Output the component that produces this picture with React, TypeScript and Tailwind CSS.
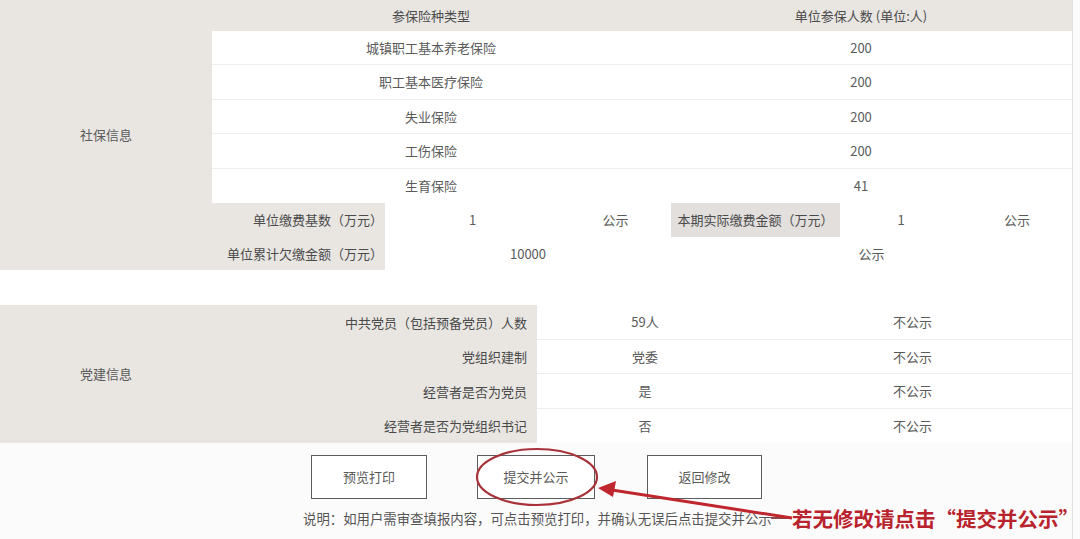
import React from 'react';

const font = 'font-["Noto_Sans_CJK_SC","Noto_Sans",sans-serif]';

const insurances = [
  { name: '城镇职工基本养老保险', count: '200' },
  { name: '职工基本医疗保险', count: '200' },
  { name: '失业保险', count: '200' },
  { name: '工伤保险', count: '200' },
  { name: '生育保险', count: '41' },
];

const party = [
  { label: '中共党员（包括预备党员）人数', value: '59人' },
  { label: '党组织建制', value: '党委' },
  { label: '经营者是否为党员', value: '是' },
  { label: '经营者是否为党组织书记', value: '否' },
];

export default function App() {
  return (
    <div className={`relative w-[1080px] h-[539px] overflow-hidden bg-[#fcfbfb] text-[13px] text-[#5a5a5a] ${font}`}>
      <div className="w-[1073px] h-full border-r border-[#e4e1de] flex flex-col">
        {/* 社保信息 */}
        <div className="flex h-[270px] shrink-0">
          <div className="w-[212px] bg-[#e9e6e2] flex items-center justify-center">社保信息</div>
          <div className="flex-1 flex flex-col">
            <div className="h-[31px] shrink-0 bg-[#e9e6e2] flex items-center text-[#4a4a4a]">
              <div className="w-[438px] text-center">参保险种类型</div>
              <div className="flex-1 text-center">单位参保人数 (单位:人)</div>
            </div>
            <div className="bg-white shrink-0">
              {insurances.map((row, i) => (
                <div
                  key={row.name}
                  className={`h-[34.4px] flex items-center ${i < insurances.length - 1 ? 'border-b border-[#f0eeec]' : ''}`}
                >
                  <div className="w-[438px] text-center">{row.name}</div>
                  <div className="flex-1 text-center">{row.count}</div>
                </div>
              ))}
            </div>
            <div className="h-[34px] shrink-0 flex items-stretch bg-white">
              <div className="w-[173px] bg-[#e9e6e2] flex items-center justify-end pr-[2px] text-[#4a4a4a]">单位缴费基数（万元）</div>
              <div className="w-[175px] flex items-center justify-center">1</div>
              <div className="w-[111px] flex items-center justify-center">公示</div>
              <div className="w-[169px] bg-[#e2dfdc] flex items-center justify-center text-[#4a4a4a]">本期实际缴费金额（万元）</div>
              <div className="w-[122px] flex items-center justify-center">1</div>
              <div className="flex-1 flex items-center justify-center">公示</div>
            </div>
            <div className="h-[33px] shrink-0 flex items-stretch bg-white">
              <div className="w-[173px] bg-[#e9e6e2] flex items-center justify-end pr-[2px] text-[#4a4a4a]">单位累计欠缴金额（万元）</div>
              <div className="w-[286px] flex items-center justify-center">10000</div>
              <div className="flex-1 flex items-center justify-center">公示</div>
            </div>
          </div>
        </div>

        <div className="h-[35px] shrink-0 bg-white" />

        {/* 党建信息 */}
        <div className="flex h-[138px] shrink-0">
          <div className="w-[537px] bg-[#e9e6e2] flex">
            <div className="w-[212px] flex items-center justify-center">党建信息</div>
            <div className="flex-1 flex flex-col">
              {party.map((row) => (
                <div key={row.label} className="h-[34.5px] flex items-center justify-end pr-[10px] text-[#4a4a4a]">
                  {row.label}
                </div>
              ))}
            </div>
          </div>
          <div className="flex-1 bg-white flex flex-col">
            {party.map((row, i) => (
              <div
                key={row.label}
                className={`h-[34.5px] flex items-center ${i < party.length - 1 ? 'border-b border-[#f0eeec]' : ''}`}
              >
                <div className="w-[216px] text-center">{row.value}</div>
                <div className="flex-1 text-center">不公示</div>
              </div>
            ))}
          </div>
        </div>

        {/* 操作按钮 */}
        <div className="mt-[12px] flex shrink-0">
          <div className="ml-[311px] w-[116px] h-[44px] border border-[#5c5c5c] bg-white flex items-center justify-center">预览打印</div>
          <div className="ml-[50px] w-[118px] h-[44px] border border-[#5c5c5c] bg-white flex items-center justify-center">提交并公示</div>
          <div className="ml-[52px] w-[115px] h-[44px] border border-[#5c5c5c] bg-white flex items-center justify-center">返回修改</div>
        </div>

        <div className="mt-[9px] flex items-center shrink-0">
          <div className="ml-[303px] w-[468px] shrink-0 whitespace-nowrap text-[13.4px] text-[#555]">说明：如用户需审查填报内容，可点击预览打印，并确认无误后点击提交并公示</div>
          <div className="w-[20px] h-[2px] shrink-0 bg-[#8a4a4a]" />
          <div className="ml-[1px] text-[20.5px] font-bold text-[#b8232d] leading-none whitespace-nowrap">若无修改请点击“提交并公示”</div>
        </div>
      </div>

      {/* 红色标注：圈和箭头 */}
      <svg className="absolute left-0 top-0 pointer-events-none" width="1080" height="539">
        <ellipse cx="537" cy="477" rx="60" ry="28" fill="none" stroke="#a8323a" strokeWidth="2.2" />
        <line x1="792" y1="518" x2="612" y2="490" stroke="#c0262d" strokeWidth="3" />
        <polygon points="598,488 616,481 613,497" fill="#c0262d" />
      </svg>
    </div>
  );
}
